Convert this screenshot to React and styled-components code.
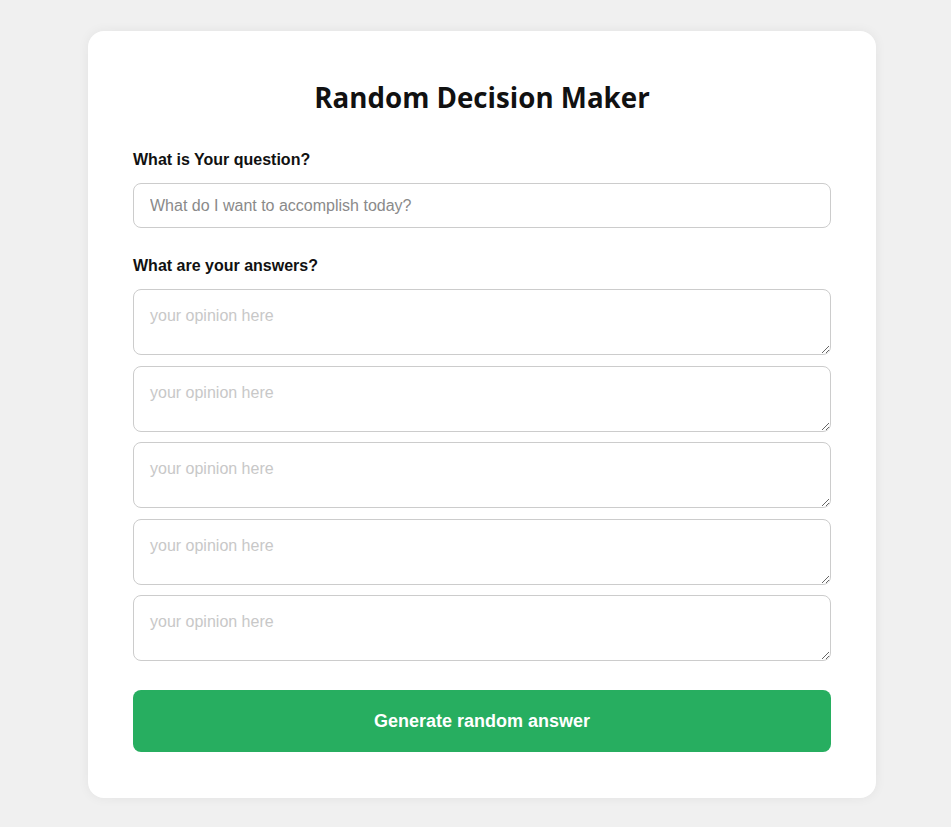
import styled, { createGlobalStyle } from "styled-components";

const GlobalStyle = createGlobalStyle`
    body {
        margin: 0;
        background-color: #f0f0f0;
        font-family: "Liberation Sans", Arial, sans-serif;
    }
`

const Page = styled.div`
    padding: 31px 75px 29px 88px;
`

const Card = styled.div`
    width: 788px;
    box-sizing: border-box;
    background-color: #fff;
    border-radius: 16px;
    padding: 45px 45px 46px;
    box-shadow: 0 0 12px rgba(0, 0, 0, 0.06);
`

const Title = styled.h1`
    margin: 0 0 33px;
    text-align: center;
    font-family: "Open Sans", sans-serif;
    font-size: 27.7px;
    font-weight: 700;
    line-height: 42px;
    color: #111;
`

const Label = styled.label`
    display: block;
    font-size: 16px;
    font-weight: 700;
    line-height: 18px;
    color: #111;
    margin: ${({ $top }) => $top || 0}px 0 ${({ $bottom }) => $bottom || 15}px;
`

const field = `
    display: block;
    width: 100%;
    box-sizing: border-box;
    border: 1px solid #ccc;
    border-radius: 8px;
    padding: 0 16px;
    font-family: "Liberation Sans", Arial, sans-serif;
    font-size: 16px;
    color: #222;
    background: #fff;
    outline: none;
`

const QuestionInput = styled.input`
    ${field}
    height: 45px;
    &::placeholder {
        color: #8a8a8a;
    }
`

const AnswerList = styled.div`
    display: flex;
    flex-direction: column;
    gap: 10.5px;
`

const Answer = styled.textarea`
    ${field}
    height: 66px;
    padding-top: 17px;
    line-height: 18px;
    resize: vertical;
    &::placeholder {
        color: #c8c8c8;
    }
`

const GenerateButton = styled.button`
    display: block;
    width: 100%;
    height: 62px;
    margin-top: 29px;
    border: none;
    border-radius: 8px;
    background-color: #27ae60;
    color: #fff;
    font-family: "Liberation Sans", Arial, sans-serif;
    font-size: 18px;
    font-weight: 700;
    cursor: pointer;
`

export default function App() {
    return (
        <>
            <GlobalStyle />
            <Page>
                <Card>
                    <Title>Random Decision Maker</Title>
                    <Label $bottom={14}>What is Your question?</Label>
                    <QuestionInput placeholder="What do I want to accomplish today?" />
                    <Label $top={29} $bottom={14}>What are your answers?</Label>
                    <AnswerList>
                        {[0, 1, 2, 3, 4].map((i) => (
                            <Answer key={i} placeholder="your opinion here" />
                        ))}
                    </AnswerList>
                    <GenerateButton>Generate random answer</GenerateButton>
                </Card>
            </Page>
        </>
    )
}
